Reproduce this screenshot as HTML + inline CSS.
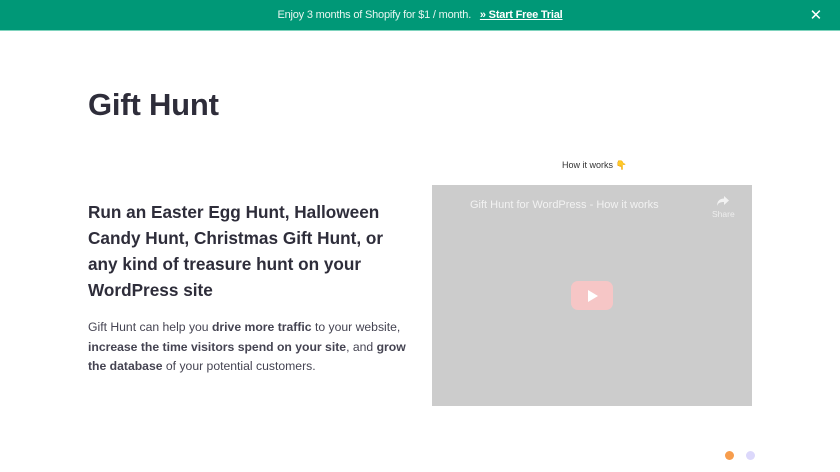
<!DOCTYPE html>
<html><head><meta charset="utf-8"><style>
*{margin:0;padding:0;box-sizing:border-box}
body{width:840px;height:472px;overflow:hidden;background:#fff;font-family:"Liberation Sans",sans-serif;color:#2e2d3a;position:relative}
.bar{position:absolute;left:0;top:0;width:840px;height:31px;background:#009877;border-bottom:1px solid #7fd3bd;color:#e8f6f1;font-size:11px;text-align:center;line-height:31px;letter-spacing:-0.2px}
.bar b{color:#fff;text-decoration:underline;margin-left:6px}
.x{position:absolute;right:18px;top:0;color:#fff;font-size:15px}
h1{position:absolute;left:88px;top:87px;font-size:31px;font-weight:bold;letter-spacing:-0.2px}
h2{position:absolute;left:88px;top:199px;font-size:17.2px;line-height:26px;font-weight:bold;white-space:nowrap}
p{position:absolute;left:88px;top:318px;font-size:12.2px;line-height:19.7px;white-space:nowrap;color:#454452}
.hw{position:absolute;left:562px;top:160px;font-size:9px;color:#333}
.vid{position:absolute;left:432px;top:185px;width:320px;height:221px;background:#cccccc}
.vt{position:absolute;left:38px;top:14px;color:#f2f2f2;font-size:11px}
.sh{position:absolute;left:280px;top:10px;color:#eee;font-size:8.5px;text-align:center}
.play{position:absolute;left:139px;top:96px;width:42px;height:29px;background:#f6c6c6;border-radius:7px}
.play:after{content:"";position:absolute;left:17px;top:9px;border-left:10px solid #fff;border-top:6px solid transparent;border-bottom:6px solid transparent}
.d{position:absolute;width:9px;height:9px;border-radius:50%;top:451px}
</style></head><body>
<div class="bar">Enjoy 3 months of Shopify for $1 / month. <b>» Start Free Trial</b><span class="x">✕</span></div>
<h1>Gift Hunt</h1>
<h2>Run an Easter Egg Hunt, Halloween<br>Candy Hunt, Christmas Gift Hunt, or<br>any kind of treasure hunt on your<br>WordPress site</h2>
<p>Gift Hunt can help you <b>drive more traffic</b> to your website,<br><b>increase the time visitors spend on your site</b>, and <b>grow</b><br><b>the database</b> of your potential customers.</p>
<div class="hw">How it works <span style="color:#f5b400">👇</span></div>
<div class="vid"><div class="vt">Gift Hunt for WordPress - How it works</div>
<div class="sh"><svg width="14" height="12" viewBox="0 0 14 12"><path d="M8 1l5 4.5-5 4.5V7C4 7 2 8 1 11 1 6 4 3.5 8 3.5z" fill="#f2f2f2"/></svg><br>Share</div>
<div class="play"></div></div>
<div class="d" style="left:725px;background:#f79d4d"></div>
<div class="d" style="left:746px;background:#dcd8fb"></div>
</body></html>
